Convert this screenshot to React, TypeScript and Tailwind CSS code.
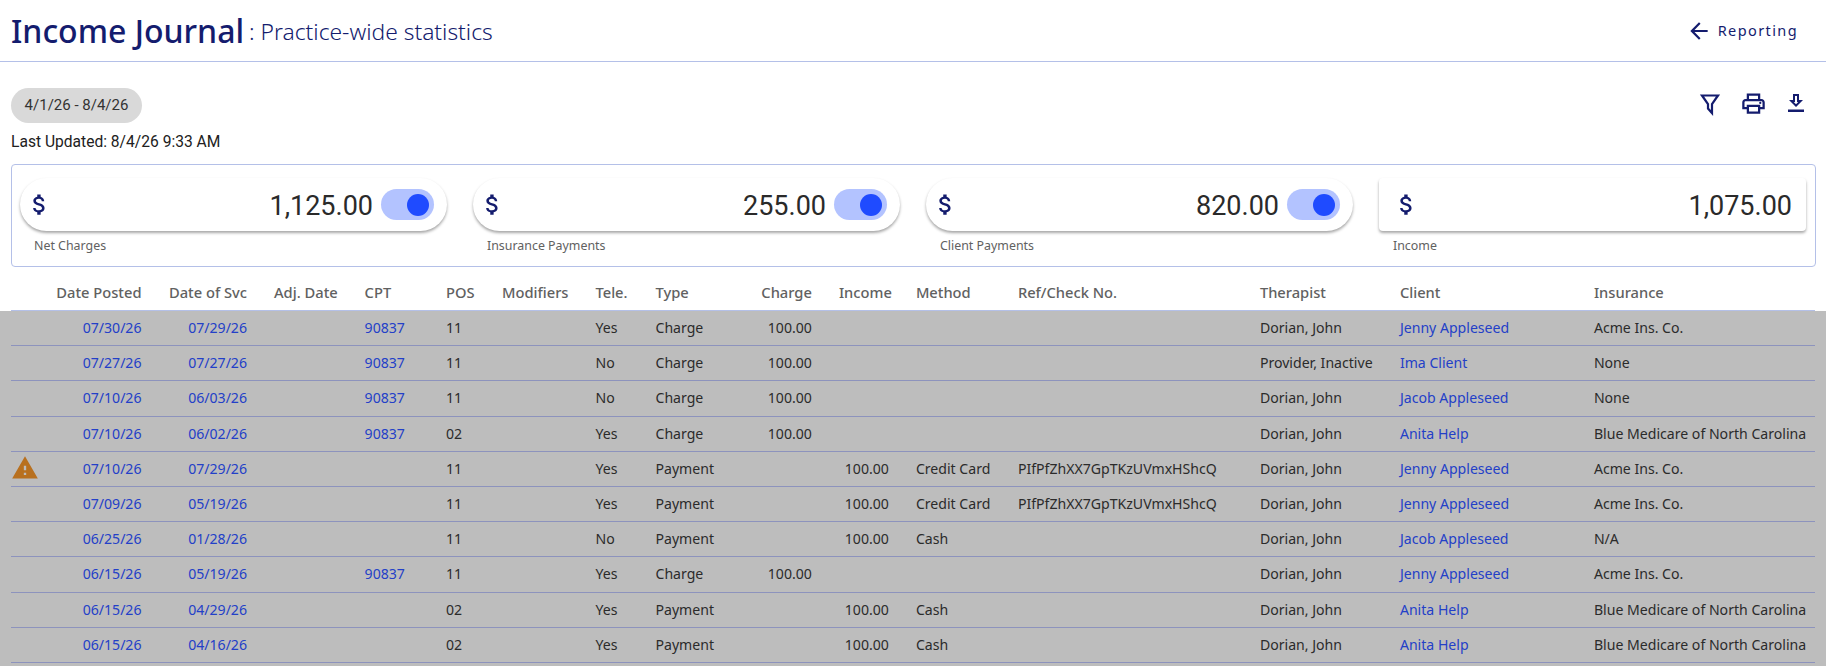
import { MdArrowBack, MdOutlinePrint, MdWarning, MdAttachMoney } from 'react-icons/md';

const GRID =
  'grid grid-cols-[18px_85.5px_78.5px_63.6px_54.4px_29px_66.5px_33px_50px_79.4px_50px_75px_215px_113px_167px_1fr] gap-x-[27px] items-center';

const COLUMNS = [
  { label: '', right: false },
  { label: 'Date Posted', right: true },
  { label: 'Date of Svc', right: true },
  { label: 'Adj. Date', right: false },
  { label: 'CPT', right: false },
  { label: 'POS', right: false },
  { label: 'Modifiers', right: false },
  { label: 'Tele.', right: false },
  { label: 'Type', right: false },
  { label: 'Charge', right: true },
  { label: 'Income', right: true },
  { label: 'Method', right: false },
  { label: 'Ref/Check No.', right: false },
  { label: 'Therapist', right: false },
  { label: 'Client', right: false },
  { label: 'Insurance', right: false },
];

const REF = 'PIfPfZhXX7GpTKzUVmxHShcQ';
const BLUE = 'Blue Medicare of North Carolina';

const ROWS = [
  { posted: '07/30/26', svc: '07/29/26', cpt: '90837', pos: '11', tele: 'Yes', type: 'Charge', charge: '100.00', therapist: 'Dorian, John', client: 'Jenny Appleseed', ins: 'Acme Ins. Co.' },
  { posted: '07/27/26', svc: '07/27/26', cpt: '90837', pos: '11', tele: 'No', type: 'Charge', charge: '100.00', therapist: 'Provider, Inactive', client: 'Ima Client', ins: 'None' },
  { posted: '07/10/26', svc: '06/03/26', cpt: '90837', pos: '11', tele: 'No', type: 'Charge', charge: '100.00', therapist: 'Dorian, John', client: 'Jacob Appleseed', ins: 'None' },
  { posted: '07/10/26', svc: '06/02/26', cpt: '90837', pos: '02', tele: 'Yes', type: 'Charge', charge: '100.00', therapist: 'Dorian, John', client: 'Anita Help', ins: BLUE },
  { warn: true, posted: '07/10/26', svc: '07/29/26', pos: '11', tele: 'Yes', type: 'Payment', income: '100.00', method: 'Credit Card', ref: REF, therapist: 'Dorian, John', client: 'Jenny Appleseed', ins: 'Acme Ins. Co.' },
  { posted: '07/09/26', svc: '05/19/26', pos: '11', tele: 'Yes', type: 'Payment', income: '100.00', method: 'Credit Card', ref: REF, therapist: 'Dorian, John', client: 'Jenny Appleseed', ins: 'Acme Ins. Co.' },
  { posted: '06/25/26', svc: '01/28/26', pos: '11', tele: 'No', type: 'Payment', income: '100.00', method: 'Cash', therapist: 'Dorian, John', client: 'Jacob Appleseed', ins: 'N/A' },
  { posted: '06/15/26', svc: '05/19/26', cpt: '90837', pos: '11', tele: 'Yes', type: 'Charge', charge: '100.00', therapist: 'Dorian, John', client: 'Jenny Appleseed', ins: 'Acme Ins. Co.' },
  { posted: '06/15/26', svc: '04/29/26', pos: '02', tele: 'Yes', type: 'Payment', income: '100.00', method: 'Cash', therapist: 'Dorian, John', client: 'Anita Help', ins: BLUE },
  { posted: '06/15/26', svc: '04/16/26', pos: '02', tele: 'Yes', type: 'Payment', income: '100.00', method: 'Cash', therapist: 'Dorian, John', client: 'Anita Help', ins: BLUE },
];

type Row = (typeof ROWS)[number] & { warn?: boolean; income?: string; method?: string; ref?: string; charge?: string; cpt?: string };

function StatCard({ amount, label, toggle = true }: { amount: string; label: string; toggle?: boolean }) {
  return (
    <div className="flex-1">
      <div
        className={`h-[53px] bg-white flex items-center shadow-[0_2px_3px_rgba(0,0,0,0.35)] ${
          toggle ? 'rounded-full pl-[6px] pr-[13px]' : 'rounded pl-[14px] pr-[14px]'
        }`}
      >
        <MdAttachMoney className="text-[#141c6e] w-[27px] h-[27px] -mt-[1px]" />
        <span className="ml-auto mt-[4px] font-['Roboto',sans-serif] text-[27px] text-[#2a2a2a]">{amount}</span>
        {toggle && (
          <span className="ml-2 w-[53px] h-[31px] rounded-full bg-[#b3c3ff] flex items-center justify-end pr-[5px]">
            <span className="w-[22px] h-[22px] rounded-full bg-[#1f4bff]" />
          </span>
        )}
      </div>
      <div className="pl-[14px] mt-[7px] text-[12.4px] leading-[16px] text-[#616161]">{label}</div>
    </div>
  );
}

function TableRow({ row }: { row: Row }) {
  return (
    <div className={`${GRID} h-[35.2px] pb-px border-b border-[#8d93bd] text-[14.1px] text-[#2b2b2b]`}>
      <div className="h-[18px] overflow-visible">
        {row.warn && <MdWarning className="text-[#b8701f] w-[28px] h-[28px] -mt-[5px]" />}
      </div>
      <div className="text-right text-[#2340c8]">{row.posted}</div>
      <div className="text-right text-[#2340c8]">{row.svc}</div>
      <div />
      <div className="text-[#2340c8]">{row.cpt}</div>
      <div>{row.pos}</div>
      <div />
      <div>{row.tele}</div>
      <div>{row.type}</div>
      <div className="text-right">{row.charge}</div>
      <div className="text-right">{row.income}</div>
      <div className="whitespace-nowrap">{row.method}</div>
      <div>{row.ref}</div>
      <div className="whitespace-nowrap">{row.therapist}</div>
      <div className="text-[#2340c8] whitespace-nowrap">{row.client}</div>
      <div className="whitespace-nowrap">{row.ins}</div>
    </div>
  );
}

export default function App() {
  return (
    <div className="h-[666px] overflow-hidden bg-white font-['Noto_Sans',sans-serif]">
      <header className="h-[62px] border-b border-[#b4c0e8] flex items-center px-[11px] text-[#141c6e]">
        <h1 className="text-[32px] font-medium">Income Journal</h1>
        <span className="ml-[5px] mt-[4px] text-[22.8px] font-light">: Practice-wide statistics</span>
        <a className="ml-auto mr-[17px] flex items-center gap-[6px] text-[14.5px] tracking-[1.4px]">
          <MdArrowBack className="w-[26px] h-[26px]" />
          Reporting
        </a>
      </header>

      <div className="px-[11px] pt-[26px] flex justify-between">
        <div className="font-['Roboto',sans-serif]">
          <div className="w-[131px] h-[35px] rounded-full bg-[#d9d9d9] flex items-center justify-center text-[15px] text-[#333]">
            4/1/26 - 8/4/26
          </div>
          <div className="mt-[10px] text-[15.6px] leading-[18px] text-[#212121]">Last Updated: 8/4/26 9:33 AM</div>
        </div>
        <div className="flex items-center h-[27px] gap-[17.5px] text-[#141c6e] mr-[7px] mt-[2px]">
          <svg viewBox="0 0 24 24" className="w-6 h-6" fill="none" stroke="currentColor" strokeWidth="2.2">
            <path d="M4 3.5h16l-6 8.5v9l-4-4.5v-4.5z" />
          </svg>
          <MdOutlinePrint className="w-[27px] h-[27px]" />
          <svg viewBox="0 0 24 24" className="w-6 h-6" fill="currentColor">
            <path d="M4 17.5h16V20H4z" />
            <path fillRule="evenodd" d="M9 2h6v6h4l-7 7-7-7h4zM11 4v6H9.8l2.2 2.2 2.2-2.2H13V4z" />
          </svg>
        </div>
      </div>

      <section className="ml-[11px] mr-[10px] mt-[13px] h-[103px] border border-[#b4c0e8] rounded flex gap-[26px] pl-2 pr-[9px] pt-[13px]">
        <StatCard amount="1,125.00" label="Net Charges" />
        <StatCard amount="255.00" label="Insurance Payments" />
        <StatCard amount="820.00" label="Client Payments" />
        <StatCard amount="1,075.00" label="Income" toggle={false} />
      </section>

      <div className={`${GRID} mx-[11px] h-[44px] pt-[7px] border-b border-[#b4c0e8] text-[14.7px] font-medium text-[#616161]`}>
        {COLUMNS.map((c, i) => (
          <div key={i} className={`whitespace-nowrap ${c.right ? 'text-right' : ''}`}>
            {c.label}
          </div>
        ))}
      </div>

      <div className="bg-[#bdbdbd] h-[400px]">
        <div className="mx-[11px]">
          {ROWS.map((row, i) => (
            <TableRow key={i} row={row as Row} />
          ))}
        </div>
      </div>
    </div>
  );
}
